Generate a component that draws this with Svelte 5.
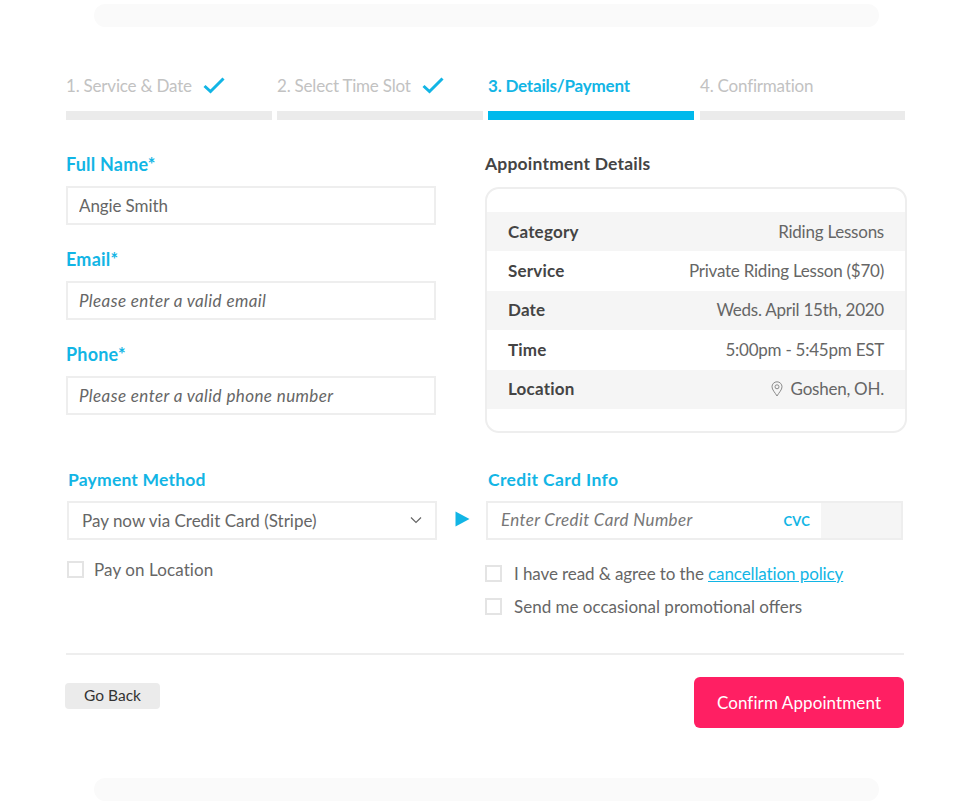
<script>
    const steps = [
        { label: '1. Service & Date', done: true },
        { label: '2. Select Time Slot', done: true },
        { label: '3. Details/Payment', active: true },
        { label: '4. Confirmation' }
    ];

    const details = [
        { name: 'Category', value: 'Riding Lessons' },
        { name: 'Service', value: 'Private Riding Lesson ($70)' },
        { name: 'Date', value: 'Weds. April 15th, 2020' },
        { name: 'Time', value: '5:00pm - 5:45pm EST' },
        { name: 'Location', value: 'Goshen, OH.', pin: true }
    ];
</script>

<div class="page">
    <div class="ghost"></div>

    <div class="content">
        <div class="steps">
            {#each steps as step}
                <div class="step" class:active={step.active}>
                    <div class="step-label">
                        <span>{step.label}</span>
                        {#if step.done}
                            <svg width="22" height="17" viewBox="0 0 22 17" class="check">
                                <path d="M1.5 9 L7.5 14.5 L20.5 1.5" fill="none" stroke="#12b5e5" stroke-width="3" />
                            </svg>
                        {/if}
                    </div>
                    <div class="step-bar"></div>
                </div>
            {/each}
        </div>

        <div class="top-row">
            <div class="fields">
                <label class="blue" for="name">Full Name*</label>
                <input id="name" class="field" value="Angie Smith" />
                <label class="blue" for="email">Email*</label>
                <input id="email" class="field" placeholder="Please enter a valid email" />
                <label class="blue" for="phone">Phone*</label>
                <input id="phone" class="field" placeholder="Please enter a valid phone number" />
            </div>

            <div class="summary">
                <h3>Appointment Details</h3>
                <div class="card">
                    {#each details as row}
                        <div class="row">
                            <span class="row-name">{row.name}</span>
                            <span class="row-value">
                                {#if row.pin}
                                    <svg width="12" height="16" viewBox="0 0 12 16" class="pin">
                                        <path d="M6 15 C4 11.5 1 8.8 1 5.8 A5 5 0 0 1 11 5.8 C11 8.8 8 11.5 6 15 Z" fill="none" stroke="#8a8a8a" />
                                        <circle cx="6" cy="5.8" r="2" fill="none" stroke="#8a8a8a" />
                                    </svg>
                                {/if}
                                {row.value}
                            </span>
                        </div>
                    {/each}
                </div>
            </div>
        </div>

        <div class="pay-row">
            <div class="pay-left">
                <div class="blue pay-label">Payment Method</div>
                <div class="select">
                    <span>Pay now via Credit Card (Stripe)</span>
                    <svg width="12" height="8" viewBox="0 0 12 8">
                        <path d="M1 1.5 L6 6.5 L11 1.5" fill="none" stroke="#666" stroke-width="1.2" />
                    </svg>
                </div>
                <label class="tick first">
                    <span class="box"></span>
                    Pay on Location
                </label>
            </div>

            <svg class="arrow" width="15" height="16" viewBox="0 0 15 16">
                <path d="M0.5 0.5 L14.5 8 L0.5 15.5 Z" fill="#12b5e5" />
            </svg>

            <div class="pay-right">
                <div class="blue pay-label">Credit Card Info</div>
                <div class="card-input">
                    <span class="card-number">Enter Credit Card Number</span>
                    <span class="cvc">CVC</span>
                    <span class="cvc-box"></span>
                </div>
                <label class="tick agree">
                    <span class="box"></span>
                    <span>I have read &amp; agree to the <a href="#policy">cancellation policy</a></span>
                </label>
                <label class="tick offers">
                    <span class="box"></span>
                    Send me occasional promotional offers
                </label>
            </div>
        </div>

        <hr />

        <div class="actions">
            <button class="back">Go Back</button>
            <button class="confirm">Confirm Appointment</button>
        </div>
    </div>

    <div class="ghost bottom"></div>
</div>

<style>
    :global(body) {
        background: #fff;
        font-family: Lato, "Open Sans", sans-serif;
    }

    .page {
        width: 973px;
        height: 806px;
        padding-top: 4px;
        box-sizing: border-box;
        overflow: hidden;
        color: #666;
        font-size: 17px;
    }

    .ghost {
        width: 785px;
        height: 23px;
        margin-left: 94px;
        border-radius: 12px;
        background: #fafafa;
    }

    .ghost.bottom {
        margin-top: 50px;
    }

    .content {
        width: 839px;
        margin-left: 66px;
        height: 701px;
    }

    .steps {
        display: grid;
        grid-template-columns: repeat(4, 1fr);
        gap: 5px;
        padding-top: 43px;
    }

    .step:last-child {
        margin-left: 1px;
    }

    .step-label {
        display: flex;
        align-items: center;
        gap: 11px;
        height: 30px;
        color: #c2c2c2;
        letter-spacing: -0.2px;
    }

    .step-bar {
        height: 9px;
        margin-top: 11px;
        background: #ebebeb;
    }

    .active .step-label {
        color: #12b5e5;
        font-weight: 700;
    }

    .active .step-bar {
        background: #00b9ec;
    }

    .blue {
        display: block;
        color: #12b5e5;
        font-size: 17.5px;
        font-weight: 700;
        letter-spacing: 0.2px;
    }

    .top-row {
        display: flex;
        justify-content: space-between;
        padding-top: 33px;
        width: 841px;
    }

    .fields {
        width: 370px;
        display: flex;
        flex-direction: column;
    }

    .fields label {
        height: 22px;
        line-height: 22px;
        font-size: 18px;
    }

    .field {
        height: 39px;
        box-sizing: border-box;
        margin: 11px 0 23px;
        padding: 0 11px 1px;
        border: 2px solid #eee;
        font: inherit;
        letter-spacing: -0.1px;
        color: #666;
        outline: none;
    }

    .field::placeholder {
        color: #666;
        font-style: italic;
        letter-spacing: 0.4px;
    }

    .summary {
        width: 422px;
    }

    h3 {
        margin: 0 0 12px;
        height: 22px;
        line-height: 22px;
        font-size: 17.5px;
        font-weight: 700;
        letter-spacing: 0.2px;
        color: #444;
    }

    .card {
        box-sizing: border-box;
        height: 246px;
        padding: 23px 0;
        border: 2px solid #eee;
        border-radius: 14px;
    }

    .row {
        display: flex;
        justify-content: space-between;
        align-items: center;
        box-sizing: border-box;
        height: 39.4px;
        padding: 0 21px 1px;
    }

    .row:nth-child(odd) {
        background: #f5f5f5;
    }

    .row-name {
        font-weight: 700;
        letter-spacing: 0.2px;
        color: #444;
    }

    .row-value {
        display: flex;
        align-items: center;
        gap: 8px;
        letter-spacing: -0.24px;
    }

    .pay-row {
        display: flex;
        align-items: flex-start;
        padding-top: 31px;
        height: 184px;
    }

    .pay-left {
        width: 370px;
        margin-left: 1px;
    }

    .pay-label {
        height: 22px;
        line-height: 22px;
        margin-bottom: 10px;
        margin-left: 1px;
    }

    .pay-right .pay-label {
        letter-spacing: 0.4px;
    }

    .select {
        display: flex;
        justify-content: space-between;
        align-items: center;
        box-sizing: border-box;
        height: 39px;
        padding: 0 13px 1px;
        border: 2px solid #eee;
    }

    .tick {
        display: flex;
        align-items: center;
        gap: 10px;
        height: 20px;
        letter-spacing: 0.1px;
    }

    .tick.first {
        margin-top: 19px;
    }

    .box {
        flex: none;
        width: 17px;
        height: 17px;
        box-sizing: border-box;
        border: 2px solid #e4e4e4;
    }

    .arrow {
        margin: 42px 17px 0 18px;
    }

    .pay-right {
        width: 416px;
    }

    .card-input {
        display: flex;
        align-items: center;
        box-sizing: border-box;
        height: 39px;
        margin-left: -1px;
        padding-left: 13px;
        border: 2px solid #eee;
    }

    .card-number {
        flex: 1;
        padding-bottom: 2px;
        font-style: italic;
        letter-spacing: 0.35px;
        color: #777;
    }

    .cvc {
        color: #12b5e5;
        font-size: 13px;
        font-weight: 700;
        letter-spacing: 0.2px;
        margin-right: 11px;
    }

    .cvc-box {
        width: 80px;
        height: 100%;
        background: #f5f5f5;
    }

    .pay-right .tick {
        margin-left: -2px;
        gap: 12px;
        letter-spacing: -0.1px;
    }

    .tick.agree {
        margin-top: 23px;
    }

    .pay-right .tick.offers {
        margin-top: 13px;
        letter-spacing: 0;
    }

    a {
        color: #12b5e5;
    }

    hr {
        margin: 0 1px 0 0;
        border: none;
        height: 2px;
        background: #eee;
    }

    .actions {
        display: flex;
        justify-content: space-between;
        align-items: flex-start;
        margin-right: 1px;
        padding-top: 22px;
    }

    .back {
        margin: 6px 0 0 -1px;
        padding-bottom: 3px;
        width: 95px;
        height: 26px;
        border: none;
        border-radius: 4px;
        background: #ebebeb;
        color: #333;
        font: inherit;
        font-size: 15.5px;
    }

    .confirm {
        width: 210px;
        height: 51px;
        padding-bottom: 2px;
        border: none;
        border-radius: 6px;
        background: #ff1f63;
        color: #fff;
        font: inherit;
        letter-spacing: 0.1px;
    }
</style>
